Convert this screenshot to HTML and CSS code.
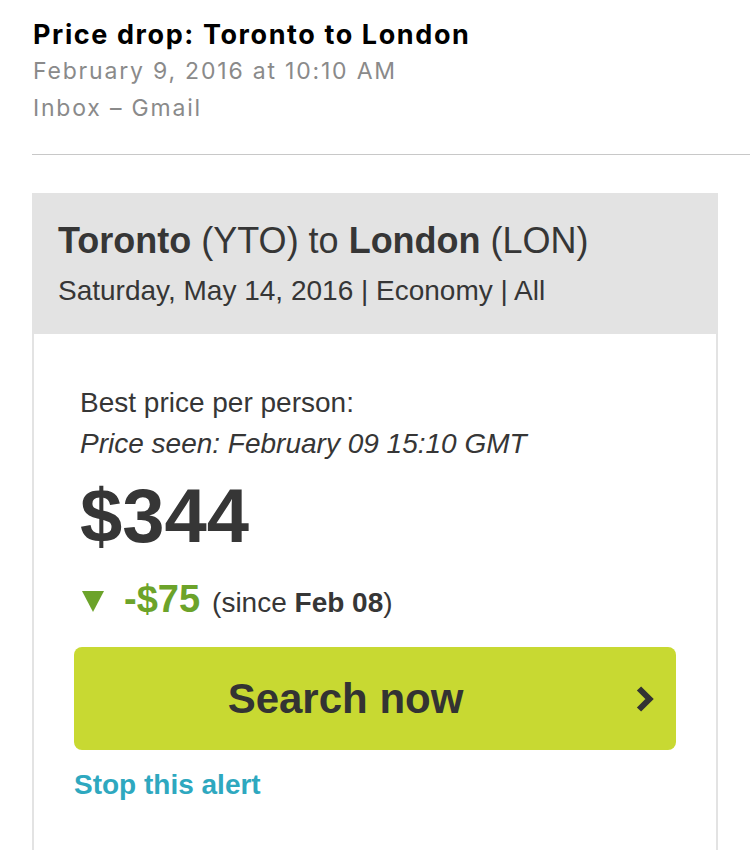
FILE: index.html
```html
<!DOCTYPE html>
<html lang="en">
<head>
<meta charset="utf-8">
<title>Price drop: Toronto to London</title>
<link rel="stylesheet" href="styles.css">
</head>
<body>
  <header class="mail-head">
    <h1 class="subject">Price drop: Toronto to London</h1>
    <div class="meta">February 9, 2016 at 10:10 AM</div>
    <div class="meta">Inbox – Gmail</div>
  </header>
  <div class="divider"></div>
  <section class="card">
    <div class="card-head">
      <div class="route"><b>Toronto</b> (YTO) to <b>London</b> (LON)</div>
      <div class="trip">Saturday, May 14, 2016 | Economy | All</div>
    </div>
    <div class="card-body">
      <div class="price-info">
        <div class="label">Best price per person:</div>
        <div class="label seen">Price seen: February 09 15:10 GMT</div>
        <div class="price">$344</div>
        <div class="change">
          <svg class="tri" width="22" height="21" viewBox="0 0 22 21"><polygon points="0,0 22,0 11,21" fill="#6ca32a"/></svg>
          <span class="drop">-$75</span>
          <span class="since">(since <b>Feb 08</b>)</span>
        </div>
      </div>
      <a class="btn" href="#">
        <span class="btn-text">Search now</span>
        <svg class="chev" width="20" height="26" viewBox="0 0 20 26"><polyline points="4,2.5 14.5,13 4,23.5" fill="none" stroke="#333" stroke-width="6"/></svg>
      </a>
      <a class="stop" href="#">Stop this alert</a>
    </div>
  </section>
</body>
</html>
```
FILE: styles.css
```css
* { box-sizing: border-box; }
html, body { margin: 0; padding: 0; background: #fff; }
body { width: 750px; height: 850px; overflow: hidden; }

.mail-head {
  padding: 16px 0 0 33px;
  font-family: Inter, "Noto Sans", sans-serif;
}
.subject {
  margin: 0;
  font-size: 27px;
  font-weight: 700;
  line-height: 37px;
  color: #000;
  letter-spacing: 1.6px;
}
.meta {
  font-size: 23px;
  line-height: 37px;
  color: #8a8a8a;
  letter-spacing: 1.8px;
}
.divider {
  margin: 27px 0 0 32px;
  height: 1px;
  background: #c8c8c8;
}

.card {
  margin: 38px 0 0 32px;
  width: 686px;
  font-family: "Liberation Sans", Arial, sans-serif;
  color: #363636;
}
.card-head {
  background: #e3e3e3;
  padding: 26px 26px 25px;
}
.route {
  font-size: 36px;
  line-height: 44px;
}
.trip {
  margin-top: 10px;
  font-size: 28px;
  line-height: 36px;
}
.card-body {
  border-left: 2px solid #e3e3e3;
  border-right: 2px solid #e3e3e3;
  padding: 48px 40px 60px;
}
.price-info { padding-left: 6px; }
.label {
  font-size: 28px;
  line-height: 41px;
}
.seen { font-style: italic; }
.price {
  margin-top: 14px;
  font-size: 76px;
  font-weight: 700;
  line-height: 76px;
}
.change {
  margin-top: 25px;
  display: flex;
  align-items: baseline;
  line-height: 40px;
}
.tri { align-self: center; margin-left: 2px; margin-right: 20px; }
.drop {
  font-size: 38px;
  font-weight: 700;
  color: #6ca32a;
  margin-right: 12px;
}
.since { font-size: 28px; }
.btn {
  margin-top: 24px;
  display: flex;
  align-items: center;
  height: 103px;
  background: #c8d932;
  border-radius: 8px;
  text-decoration: none;
  color: #333;
  padding: 0 21px 0 0;
}
.btn-text {
  flex: 1;
  text-align: center;
  font-size: 42px;
  font-weight: 700;
  padding-right: 18px;
}
.chev { display: block; }
.stop {
  display: block;
  margin-top: 19px;
  font-size: 28px;
  line-height: 32px;
  font-weight: 700;
  color: #2ea8bf;
  text-decoration: none;
}
```
